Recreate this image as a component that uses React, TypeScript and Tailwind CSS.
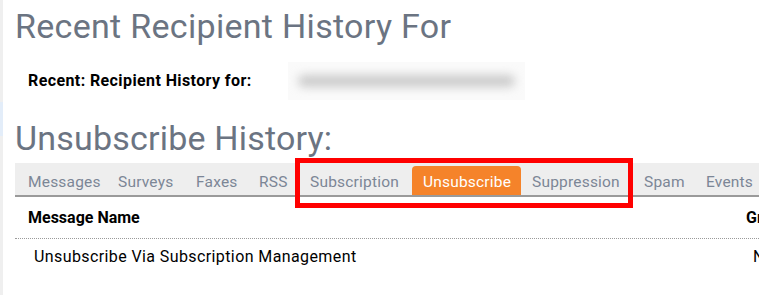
import React from "react";

const tabs: { label: string; w: string; active?: boolean }[] = [
  { label: "Messages", w: "w-[90px]" },
  { label: "Surveys", w: "w-[78px]" },
  { label: "Faxes", w: "w-[63px]" },
  { label: "RSS", w: "w-[51px]" },
  { label: "Subscription", w: "w-[113px]" },
  { label: "Unsubscribe", w: "w-[109px]", active: true },
  { label: "Suppression", w: "w-[112px]" },
  { label: "Spam", w: "w-[62px]" },
  { label: "Events", w: "w-[70px]" },
];

export default function App() {
  return (
    <div
      className="relative flex h-[295px] w-[759px] overflow-hidden bg-white"
      style={{ fontFamily: "Roboto, 'Liberation Sans', sans-serif" }}
    >
      <div className="flex w-[3px] shrink-0 flex-col bg-[#efefef]">
        <div className="h-[102px]" />
        <div className="h-[34px] bg-[#e3edf9]" />
      </div>
      <div className="min-w-0 flex-1 pl-[12px]">
        <h1 className="pt-[9px] text-[34px] leading-[34px] font-normal tracking-[0.3px] text-[#6b7482] whitespace-nowrap">
          Recent Recipient History For
        </h1>
        <div className="mt-[19px] flex h-[38px] items-center">
          <div className="w-[273px] shrink-0 pl-[13px] text-[16px] font-bold tracking-[0.4px] text-black whitespace-nowrap">
            Recent: Recipient History for:
          </div>
          <div className="flex h-[38px] w-[237px] items-center bg-[#fafafa] px-[10px]">
            <div className="h-[12px] w-full rounded-full bg-[#cbcbcb] blur-[5px]" />
          </div>
        </div>
        <h2 className="mt-[21px] text-[34px] leading-[34px] font-normal tracking-[0.2px] text-[#6b7482] whitespace-nowrap">
          Unsubscribe History:
        </h2>
        <div className="mt-[8px] flex h-[34px] w-[800px] items-end border-b-2 border-[#9a9a9a] bg-[#eeeeee] pl-[2px] whitespace-nowrap">
          {tabs.map((t) =>
            t.active ? (
              <div
                key={t.label}
                className={`${t.w} flex h-[29px] shrink-0 items-center rounded-t-[4px] bg-[#f5832a] pt-[5px] pl-[11px] text-[15.5px] tracking-[0.2px] text-white`}
              >
                {t.label}
              </div>
            ) : (
              <div
                key={t.label}
                className={`${t.w} flex h-[29px] shrink-0 items-center pt-[5px] pl-[11px] text-[15.5px] tracking-[0.2px] text-[#7c8696]`}
              >
                {t.label}
              </div>
            )
          )}
        </div>
        <div className="grid h-[42px] w-[800px] grid-cols-[731px_1fr] items-center border-b border-dotted border-[#9a9a9a] pt-[1px] text-[16px] font-bold text-black whitespace-nowrap">
          <span className="pl-[13px]">Message Name</span>
          <span>Group</span>
        </div>
        <div className="grid h-[36px] w-[800px] grid-cols-[738px_1fr] items-center text-[16px] tracking-[0.4px] text-black whitespace-nowrap">
          <span className="pl-[19px]">Unsubscribe Via Subscription Management</span>
          <span>N/A</span>
        </div>
      </div>
      <div className="pointer-events-none absolute left-[295px] top-[158px] h-[50px] w-[338px] border-[5px] border-[#ff0000]" />
    </div>
  );
}
